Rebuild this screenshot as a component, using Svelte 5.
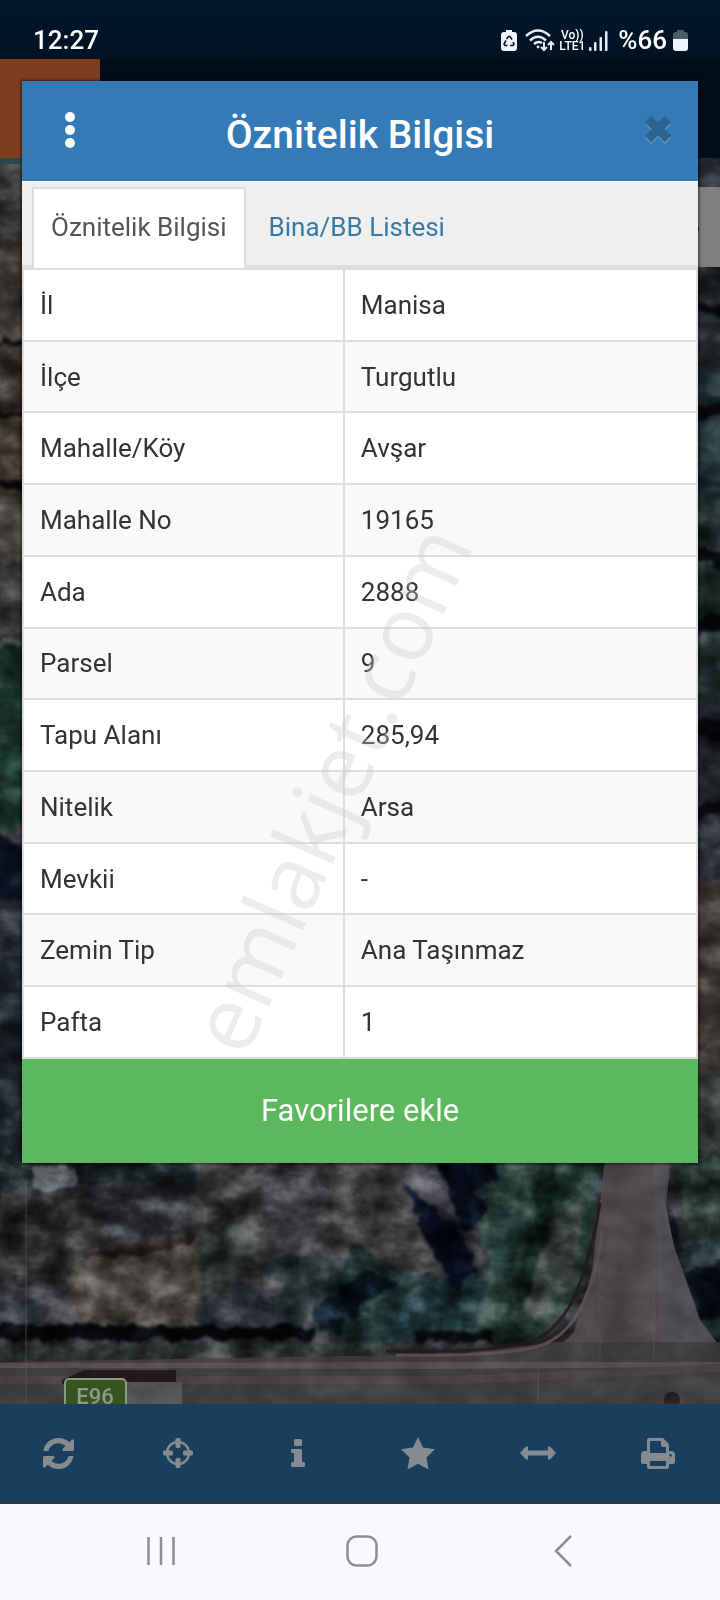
<script lang="ts">
	let tabs = ['Öznitelik Bilgisi', 'Bina/BB Listesi'];
	let active = $state(0);

	let rows = [
		['İl', 'Manisa'],
		['İlçe', 'Turgutlu'],
		['Mahalle/Köy', 'Avşar'],
		['Mahalle No', '19165'],
		['Ada', '2888'],
		['Parsel', '9'],
		['Tapu Alanı', '285,94'],
		['Nitelik', 'Arsa'],
		['Mevkii', '-'],
		['Zemin Tip', 'Ana Taşınmaz'],
		['Pafta', '1']
	];
</script>

<div class="screen">
	<header class="status">
		<time>12:27</time>
		<div class="indicators">
			<svg width="16" height="22" viewBox="0 0 16 22">
				<path d="M5 0h6v2h2q3 0 3 3v13q0 3-3 3H3q-3 0-3-3V5q0-3 3-3h2z" fill="#eef5fb" />
				<path
					d="M5.500 9 7.500 6.500h1.500l2 3M12 12l1 2-1 1.500H9M6.500 15.500H4L3 14l2-3.500"
					fill="none"
					stroke="#06182a"
					stroke-width="1.600"
				/>
			</svg>
			<svg width="30" height="23" viewBox="0 0 30 23" fill="none" stroke="#e4edf4" stroke-width="2.400">
				<path d="M1 7Q13-4 25 7M5 11.500Q13 4 21 11.500M9 15Q13 11.500 17 14" />
				<circle cx="13" cy="18" r="1.400" fill="#e4edf4" stroke="none" />
				<path d="M19 13v8M16 18l3 3 3-3M26 21v-8M23 16l3-3 3 3" stroke-width="2" />
			</svg>
			<span class="volte"><span>Vo))</span><span>LTE1</span></span>
			<svg width="19" height="20" viewBox="0 0 19 20" fill="#e4edf4">
				<rect y="16" width="2.500" height="4" rx="1" />
				<rect x="5" y="11" width="2.500" height="9" rx="1" />
				<rect x="10.500" y="6" width="2.500" height="14" rx="1" />
				<rect x="16" width="2.500" height="20" rx="1" />
			</svg>
			<strong>%66</strong>
			<svg width="15" height="21" viewBox="0 0 15 21">
				<path d="M4 0h7v2h1q3 0 3 3v4H0V5q0-3 3-3h1z" fill="#4d5d69" />
				<path d="M0 9h15v9q0 3-3 3H3q-3 0-3-3z" fill="#eef5fb" />
			</svg>
		</div>
	</header>

	<main class="stage">
		<svg class="map" viewBox="0 59 720 1345" preserveAspectRatio="xMidYMax slice" aria-hidden="true">
			<defs>
				<filter id="rough" x="0" y="0" width="100%" height="100%" color-interpolation-filters="sRGB">
					<feTurbulence type="fractalNoise" baseFrequency="0.06" numOctaves="3" seed="8" />
					<feDisplacementMap in="SourceGraphic" scale="16" xChannelSelector="R" yChannelSelector="G" />
					<feGaussianBlur stdDeviation="1.500" />
				</filter>
				<filter id="grain" x="0" y="0" width="100%" height="100%" color-interpolation-filters="sRGB">
					<feTurbulence type="fractalNoise" baseFrequency="0.03 0.04" numOctaves="4" seed="3" />
					<feColorMatrix
						values="1.4 0.6 0 0 -0.55  1.4 0.6 0 0 -0.55  1.4 0.6 0 0 -0.55  0 0 0 0 1"
					/>
				</filter>
			</defs>
			<rect y="59" width="720" height="1345" fill="#2d2e32" />
			<g filter="url(#rough)">
				<!-- west edge -->
				<path d="M-20 150h60v94h-60z" fill="#343331" />
				<path d="M-20 244h60v98h-60z" fill="#3c3835" />
				<path d="M-20 346h60v66h-60z" fill="#403a36" />
				<path d="M-20 416h60v64h-60z" fill="#3b332d" />
				<path d="M-20 486h60v76h-60z" fill="#4b4842" />
				<path d="M-20 564h60v72h-60z" fill="#3a393a" />
				<path d="M-20 342h60v5h-60zM-20 411h60v5h-60zM-20 480h60v7h-60z" fill="#0d0a0a" />
				<path d="M-20 640h60v6h-60z" fill="#59605a" />
				<path d="M-20 647h60v180h-60z" fill="#1a342b" />
				<path d="M-20 820 40 860v60h-60z" fill="#0c1423" />
				<path d="M-20 900h60v60h-60z" fill="#2d303b" />
				<path d="M-20 955h60v230h-60z" fill="#1c232a" />
				<!-- east edge -->
				<path d="M690 150h50v40h-50z" fill="#222630" />
				<path d="M690 262h50v110h-50z" fill="#23262a" />
				<path d="M690 372h50v130h-50z" fill="#1b2a2d" />
				<path d="M690 502h50v200h-50z" fill="#212e2d" />
				<path d="M690 700h50v180h-50z" fill="#25282f" />
				<path d="M690 880h50v190h-50z" fill="#3c3735" />
				<path d="M690 1070h50v100h-50z" fill="#35393a" />
				<path
					d="M690 300l40 8v10l-40-8zM690 410l40-12v14l-40 9zM690 545l40 12v14l-40-9zM690 620l40-10v18l-40 8zM690 715l40 10v20l-40-12zM690 808l40-10v12l-40 9z"
					fill="#07080c"
				/>
				<!-- fields under the panel -->
				<path d="M-20 1150h220v36l-60-6-160 16z" fill="#1a2324" />
				<path d="M-20 1192 70 1188l110-10 20 20v62l-80 10-50 14H-20z" fill="#2c2c2f" />
				<path d="M90 1188l70-6 30 6v44l-84 10z" fill="#292b31" />
				<path d="M33 1166h40v22H33z" fill="#62686a" />
				<path d="M195 1160h230v100l-110 40-120-30z" fill="#3a383b" />
				<path d="M262 1160h66l-4 60-20 40h-30l6-40-20-14z" fill="#48454a" />
				<path d="M66 1282 76 1262l120-22 8 50-8 38H84z" fill="#4b4843" />
				<path d="M78 1256l60-12 60-10-6 10-60 14z" fill="#291f1c" />
				<path d="M-20 1284h88l18 42H-20z" fill="#414146" />
				<path d="M-20 1300h60v26H-20z" fill="#30353f" />
				<path d="M196 1306 230 1286l40 12 44 30H196z" fill="#30343f" />
				<path d="M196 1240l40-14 20 20-30 50h-24z" fill="#373c3c" />
				<path d="M264 1262l60-10 40 10v60h-80z" fill="#2a3536" />
				<path d="M346 1220l50-20 50 40v60h-80l-30-30z" fill="#434344" />
				<path d="M354 1240l40 30 60 10 20 40-110 26-50-20z" fill="#1f3331" />
				<path d="M400 1300l50-20 50-6-10 56-96 10z" fill="#1d3439" />
				<path d="M320 1334 310 1310l60-40 30 10-40 24-20 26z" fill="#0b141d" />
				<path d="M475 1150h126l-8 90-24 70-38 30-60 4 20-80-20-60z" fill="#263b36" />
				<path d="M540 1160h20l-10 90-30 60-20 20 20-60z" fill="#142622" />
				<path d="M498 1210l28 8-20 50-20 20z" fill="#2d4642" />
				<path d="M556 1210l26-10-6 80-30 40-24-6z" fill="#3a423f" />
				<path d="M410 1150h30l16 68-36-20z" fill="#4a4b55" />
				<path d="M402 1184l54 42 24 46-28 18z" fill="#080d1c" />
				<path d="M432 1150h60l6 30-24 8 16 22-26 24z" fill="#080d1b" />
				<path d="M-20 1326h335v14H-20z" fill="#060709" />
				<path d="M414 1330h80v12h-80z" fill="#07090b" />
				<path d="M-20 1343h350l80-4v22H-20z" fill="#303334" />
				<path d="M672 1150h68v210l-34-20-16-60z" fill="#27342f" />
				<path d="M680 1240h60v30l-60 10z" fill="#2a373e" />
				<path d="M686 1272l54-18v80l-40-14z" fill="#0b101b" />
				<path d="M654 1196l20 16 8 40-16-20z" fill="#101519" />
				<path d="M704 1320l36-10v36h-26z" fill="#203136" />
			</g>
			<rect class="grain" y="59" width="720" height="1345" filter="url(#grain)" />
			<!-- roads -->
			<path d="M606 1150h66l-6 54 10 56 24 60 18 28-20 18H540l34-34 18-60z" fill="#4c484b" />
			<path d="M654 1150h16l-6 50 10 46 26 74 18 24h-58z" fill="#524f54" />
			<path d="M0 1362 460 1354 556 1342h164v62H0z" fill="#413e40" />
			<path d="M0 1363 460 1362h260v5L420 1369 0 1368z" fill="#575153" />
			<path d="M0 1376h450l270-12v8l-260 12H0z" fill="#4a4647" />
			<path
				d="M386 1351q100 2 140-8 36-10 54-60 14-40 20-80"
				fill="none"
				stroke="#221d1f"
				stroke-width="3"
			/>
			<path
				d="M396 1355q100 2 140-8 36-10 52-56 12-30 14-60"
				fill="none"
				stroke="#5b5152"
				stroke-width="3"
			/>
			<path d="M600 1362V1260M654 1358V1160M26 1180v224M538 1362v42" stroke="#5c5a5c" opacity="0.6" />
			<path d="M62 1380l22-10h92v14H62z" fill="#241a1b" />
			<path d="M126 1382h56v22h-56z" fill="#59595c" />
			<circle cx="672" cy="1400" r="8" fill="#251e1e" />
			<rect class="grain faint" y="1150" width="720" height="254" filter="url(#grain)" />
			<!-- road sign -->
			<rect x="65" y="1379" width="61" height="40" rx="4" fill="#36541f" stroke="#8a9a7f" stroke-width="2" />
			<text x="95" y="1404" text-anchor="middle" class="sign">E96</text>
			<!-- site header and its dimmed search box -->
			<rect y="59" width="720" height="99" fill="#000e19" />
			<rect y="59" width="100" height="99" fill="#7f3d1f" />
			<rect y="158" width="100" height="6" fill="#26494f" />
			<rect x="560" y="187" width="160" height="80" fill="#7f7f7f" />
			<circle cx="696" cy="229" r="3" fill="#1c1c1c" />
		</svg>

		<section class="panel" aria-labelledby="panel-title">
			<div class="panel-head">
				<button class="menu" aria-label="Menü"><i></i><i></i><i></i></button>
				<h1 id="panel-title">Öznitelik Bilgisi</h1>
				<button class="close" aria-label="Kapat">
					<svg width="28" height="28" viewBox="0 0 28 28" fill="none" stroke-width="9">
						<path d="M4 5l20 20M24 5 4 25" stroke="#5c95c6" />
						<path d="M4 3l20 20M24 3 4 23" stroke="#2b628f" />
					</svg>
				</button>
			</div>

			<div class="tabs" role="tablist">
				{#each tabs as tab, i}
					<button role="tab" aria-selected={active === i} class:active={active === i} onclick={() => (active = i)}>
						{tab}
					</button>
				{/each}
			</div>

			<table>
				<tbody>
					{#each rows as [label, value]}
						<tr>
							<th scope="row">{label}</th>
							<td>{value}</td>
						</tr>
					{/each}
				</tbody>
			</table>

			<button class="favorite">Favorilere ekle</button>
		</section>
	</main>

	<nav class="toolbar" aria-label="Harita araçları">
		<button aria-label="Yenile">
			<svg width="31" height="31" viewBox="0 0 1536 1536">
				<path
					d="M1511 928q0 5-1 7-64 268-268 434.500t-478 166.500q-146 0-282.500-55t-243.500-157l-129 129q-19 19-45 19t-45-19-19-45v-448q0-26 19-45t45-19h448q26 0 45 19t19 45-19 45l-137 137q71 66 161 102t187 36q134 0 250-65t186-179q11-17 53-117 8-23 30-23h192q13 0 22.500 9.500t9.500 22.500zm25-800v448q0 26-19 45t-45 19h-448q-26 0-45-19t-19-45 19-45l138-138q-148-137-349-137-134 0-250 65t-186 179q-11 17-53 117-8 23-30 23h-199q-13 0-22.500-9.500t-9.500-22.500v-7q65-268 270-434.500t480-166.500q146 0 284 55.500t245 156.500l130-129q19-19 45-19t45 19 19 45z"
				/>
			</svg>
		</button>
		<button aria-label="Konum">
			<svg width="30" height="30" viewBox="0 0 30 30">
				<circle cx="15" cy="15" r="11" fill="none" stroke="#868b90" stroke-width="2.400" />
				<path
					d="M13.500 0h3l1 1v8l-1 1h-3l-1-1V1zM13.500 20h3l1 1v8l-1 1h-3l-1-1v-8zM0 13.500l1-1h8l1 1v3l-1 1H1l-1-1zM20 13.500l1-1h8l1 1v3l-1 1h-8l-1-1z"
				/>
			</svg>
		</button>
		<button aria-label="Bilgi">
			<svg width="14" height="28" viewBox="0 0 14 28">
				<path d="M4 0h6l1 1v5l-1 1H4L3 6V1zM1 10h9l1 1v12h2l1 1v3l-1 1H1l-1-1v-3l1-1h2v-9H1l-1-1v-3z" />
			</svg>
		</button>
		<button aria-label="Favoriler">
			<svg width="34" height="33" viewBox="0 0 34 33">
				<path d="M17 0l5 10.500 12 1.700-8.500 8.300 2 11.900L17 26.800 6.500 32.400l2-11.900L0 12.200l12-1.700z" />
			</svg>
		</button>
		<button aria-label="Ölçüm">
			<svg width="36" height="14" viewBox="0 0 36 14">
				<path d="M0 7 6 .500h2V4.500h20V.500h2L36 7l-6 6.500h-2V9.500H8v4H6z" />
			</svg>
		</button>
		<button aria-label="Yazdır">
			<svg width="34" height="31" viewBox="0 0 34 31">
				<path
					fill-rule="evenodd"
					d="M6 2q0-2 2-2h14l6 6v7h2q4 0 4 4v7q0 2-2 2h-4v3q0 2-2 2H8q-2 0-2-2v-3H2q-2 0-2-2v-7q0-4 4-4h2zM9 3v12h16V9h-3q-2 0-2-2V3zM9 23v5h16v-5zM29.500 16a1.300 1.300 0 1 0 .100 0z"
				/>
			</svg>
		</button>
	</nav>

	<nav class="system" aria-label="Gezinme">
		<button aria-label="Son uygulamalar">
			<svg width="30" height="32" viewBox="0 0 30 32">
				<path d="M2.500 2v28M15 2v28M27.500 2v28" />
			</svg>
		</button>
		<button aria-label="Ana ekran">
			<svg width="32" height="32" viewBox="0 0 32 32">
				<rect x="1.500" y="1.500" width="29" height="29" rx="9" />
			</svg>
		</button>
		<button aria-label="Geri">
			<svg width="20" height="34" viewBox="0 0 20 34">
				<path d="M18 2 3 17l15 15" />
			</svg>
		</button>
	</nav>

	<svg class="watermark" viewBox="0 0 720 1600" aria-hidden="true">
		<text x="360" y="802" text-anchor="middle" transform="rotate(-66 360 802)">emlakjet.com</text>
	</svg>
</div>

<style>
	:global(body) {
		margin: 0;
		background: #f9f8fe;
	}

	.screen {
		position: relative;
		display: flex;
		flex-direction: column;
		min-height: 100vh;
		overflow: hidden;
		font-family: Roboto, 'Liberation Sans', sans-serif;
		font-size: 26px;
	}

	button {
		margin: 0;
		padding: 0;
		border: 0;
		background: none;
		font: inherit;
		color: inherit;
		cursor: pointer;
	}

	svg {
		display: block;
	}

	.status {
		display: flex;
		align-items: center;
		justify-content: space-between;
		box-sizing: border-box;
		height: 59px;
		padding: 22px 32px 0 33px;
		background: linear-gradient(#00172c, #001323);
		color: #fff;
		font-weight: 500;
		line-height: 37px;
	}

	.indicators {
		display: flex;
		align-items: center;
		gap: 8px;
	}

	.indicators strong {
		font-weight: 500;
		margin: 0 -2px 0 2px;
	}

	.volte {
		display: flex;
		flex-direction: column;
		align-items: center;
		margin: 0 -4px;
		font-size: 12px;
		line-height: 11px;
	}

	.stage {
		position: relative;
		flex: 1;
		padding: 22px 22px 241px;
	}

	.map {
		position: absolute;
		inset: 0;
		width: 100%;
		height: 100%;
	}

	.grain {
		mix-blend-mode: soft-light;
		opacity: 0.7;
	}

	.faint {
		opacity: 0.2;
	}

	.sign {
		font-size: 22px;
		font-weight: 500;
		fill: #8f9a8a;
	}

	.panel {
		position: relative;
		background: #fff;
		box-shadow: 0 0 3px 1px rgba(0, 0, 0, 0.6);
	}

	.panel-head {
		display: grid;
		grid-template-columns: 96px 1fr 96px;
		height: 100px;
		align-items: center;
		background: #337ab7;
		color: #fff;
	}

	h1 {
		margin: 8px 0 0;
		text-align: center;
		font-size: 39px;
		line-height: 48px;
		font-weight: 500;
	}

	.menu,
	.close {
		padding-bottom: 3px;
	}

	.menu {
		display: flex;
		flex-direction: column;
		align-items: center;
		gap: 3px;
	}

	.menu i {
		width: 10px;
		height: 10px;
		border-radius: 50%;
		background: #fff;
	}

	.close {
		justify-self: center;
		padding-left: 16px;
	}

	.tabs {
		display: flex;
		gap: 4px;
		padding: 5px 10px 0;
		border-top: 1px solid #fff;
		background: #efefef;
		box-shadow: inset 0 -3px #ddd;
	}

	.tabs button {
		padding: 20px 17px 23px;
		border: 2px solid transparent;
		border-bottom: 0;
		line-height: 36px;
		color: #3779a8;
	}

	.tabs .active {
		border-color: #ddd;
		background: #fff;
		color: #555;
	}

	table {
		width: 100%;
		height: 791px;
		border-collapse: collapse;
		color: #333;
	}

	th,
	td {
		padding: 0 16px;
		border: 2px solid #ddd;
		font-weight: 400;
		line-height: 36px;
		text-align: left;
	}

	th {
		width: 47.6%;
		box-sizing: border-box;
	}

	tr:nth-child(even) {
		background: #f9f9f9;
	}

	.favorite {
		display: block;
		width: 100%;
		padding: 32px 16px;
		background: #5cb85c;
		color: #fff;
		font-size: 31px;
		line-height: 40px;
	}

	.toolbar {
		display: grid;
		grid-template-columns: repeat(6, 1fr);
		height: 100px;
		background: #1a3e5d;
		box-shadow: inset 0 -3px #26394a;
	}

	.toolbar button {
		display: flex;
		align-items: center;
		justify-content: center;
		padding: 0 4px 2px 0;
	}

	.toolbar svg {
		fill: #868b90;
	}

	.system {
		display: grid;
		grid-template-columns: repeat(3, 1fr);
		height: 96px;
		padding: 0 56px 0 60px;
		background: #f9f8fe;
	}

	.system button {
		display: flex;
		align-items: center;
		justify-content: center;
		padding-bottom: 2px;
	}

	.system svg {
		fill: none;
		stroke: #8d8c91;
		stroke-width: 2.5;
	}

	.watermark {
		position: absolute;
		inset: 0;
		width: 100%;
		height: 100%;
		pointer-events: none;
	}

	.watermark text {
		font-family: 'Open Sans', sans-serif;
		font-size: 90px;
		fill: #c8c8c8;
		opacity: 0.35;
	}
</style>
